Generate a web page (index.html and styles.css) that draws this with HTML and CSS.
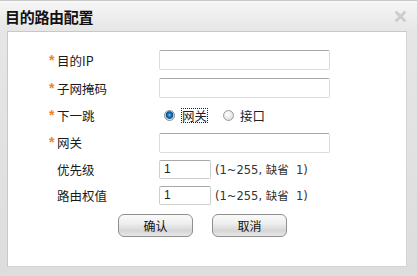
FILE: index.html
```html
<!DOCTYPE html>
<html lang="zh-CN">
<head>
    <meta charset="UTF-8">
    <title>目的路由配置</title>
    <link rel="stylesheet" href="styles.css">
</head>
<body>
    <div class="dialog">
        <div class="dialog-title">
            <h1>目的路由配置</h1>
            <span class="close">
                <svg width="11" height="11" viewBox="0 0 11 11">
                    <path d="M1.5 1.5 L9.5 9.5 M9.5 1.5 L1.5 9.5" stroke="#cdcdcd" stroke-width="3" stroke-linecap="round"/>
                </svg>
            </span>
        </div>
        <div class="panel">
            <div class="form">
                <div class="row r1">
                    <label class="label"><span class="req">*</span>目的IP</label>
                    <input class="field" type="text">
                </div>
                <div class="row r2">
                    <label class="label"><span class="req">*</span>子网掩码</label>
                    <input class="field" type="text">
                </div>
                <div class="row r3">
                    <label class="label"><span class="req">*</span>下一跳</label>
                    <div class="radios">
                        <span class="radio checked"></span><span class="radio-text focus">网关</span>
                        <span class="radio"></span><span class="radio-text">接口</span>
                    </div>
                </div>
                <div class="row r4">
                    <label class="label"><span class="req">*</span>网关</label>
                    <input class="field" type="text">
                </div>
                <div class="row r5">
                    <label class="label"><span class="req"></span>优先级</label>
                    <input class="field small" type="text" value="1">
                    <span class="hint">(1~255, 缺省&nbsp; 1)</span>
                </div>
                <div class="row r6">
                    <label class="label"><span class="req"></span>路由权值</label>
                    <input class="field small" type="text" value="1">
                    <span class="hint">(1~255, 缺省&nbsp; 1)</span>
                </div>
                <div class="buttons">
                    <button class="btn">确认</button>
                    <button class="btn">取消</button>
                </div>
            </div>
        </div>
    </div>
</body>
</html>
```

FILE: styles.css
```css
*{
    margin: 0;
    padding: 0;
    box-sizing: border-box;
}

body{
    font-family: "Liberation Sans", "Noto Sans CJK SC", sans-serif;
    font-size: 12px;
    color: #222;
    background-color: #dcdcdc;
}

.dialog{
    width: 417px;
    height: 276px;
    border-top: 1px solid #c9c9c9;
    background: linear-gradient(to bottom, #f6f6f6 0px, #e6e6e6 30px, #dddddd 100%);
    box-shadow: inset 0 1px 0 #fafafa;
}

.dialog-title{
    height: 30px;
    display: flex;
    align-items: center;
    justify-content: space-between;
    padding: 1px 11px 0 5px;
}

.dialog-title h1{
    font-family: "Noto Sans CJK SC", sans-serif;
    font-size: 15px;
    font-weight: bold;
    color: #111;
    letter-spacing: -0.3px;
}

.close{
    display: flex;
    margin-top: -1px;
}

.panel{
    height: 236px;
    margin: 0 10px 0 7px;
    background-color: #fff;
    border: 1px solid #c8c8c8;
    border-right-color: #d4d4d4;
    border-bottom-color: #d4d4d4;
    padding: 14px 0 0 41px;
}

.row{
    display: flex;
    align-items: center;
}

.r1, .r2{ height: 28px; }
.r3, .r4{ height: 27px; }
.r5, .r6{ height: 26px; }

.label{
    width: 110px;
    display: flex;
    align-items: center;
    font-family: "Noto Sans CJK SC", sans-serif;
    font-size: 12.5px;
    color: #1a1a1a;
}

.req{
    width: 8px;
    height: 14px;
    color: #f5821f;
    font-family: "Liberation Sans", sans-serif;
    font-size: 14px;
    line-height: 14px;
    font-weight: bold;
    align-self: flex-start;
    margin-top: 2px;
}

.field{
    width: 171px;
    height: 20px;
    border: 1px solid #dcdcdc;
    border-top-color: #a9a9a9;
    border-radius: 2px;
    padding: 0 4px;
    font-family: "Liberation Sans", sans-serif;
    font-size: 12px;
    color: #222;
    background: #fff;
    outline: none;
}

.field.small{
    width: 52px;
    height: 19px;
    border-color: #cfcfcf;
    border-top-color: #a9a9a9;
}

.hint{
    margin-left: 4px;
    color: #333;
    font-family: "DejaVu Sans", "Noto Sans CJK SC", sans-serif;
    font-size: 11.5px;
}

.radios{
    display: flex;
    align-items: center;
    padding-left: 5px;
}

.radio{
    width: 11px;
    height: 11px;
    border-radius: 50%;
    border: 1px solid #9a9a9a;
    background: radial-gradient(circle at 40% 35%, #ffffff 0, #e6e6e6 60%, #cfcfcf 100%);
}

.radio.checked{
    background: radial-gradient(circle at 50% 45%, #6cc0f0 0, #1572c0 2px, #0a4f90 3.4px, #dfe6ee 4.2px, #c9d0d8 100%);
    border-color: #8c8c8c;
}

.radio-text{
    margin-left: 6px;
    margin-right: 16px;
    font-family: "Noto Sans CJK SC", sans-serif;
    font-size: 12.5px;
    line-height: 13px;
}

.radio-text.focus{
    outline: 1px dotted #222;
    outline-offset: 0;
    margin-left: 7px;
}

.buttons{
    display: flex;
    gap: 19px;
    padding-left: 69px;
    margin-top: 6px;
}

.btn{
    width: 75px;
    height: 23px;
    border: 1px solid #8f8f8f;
    border-radius: 6px;
    background: linear-gradient(to bottom, #fafafa 0%, #eeeeee 40%, #d6d6d6 75%, #e8e8e8 100%);
    font-family: "Noto Sans CJK SC", sans-serif;
    font-size: 12px;
    color: #111;
    cursor: pointer;
}
```
